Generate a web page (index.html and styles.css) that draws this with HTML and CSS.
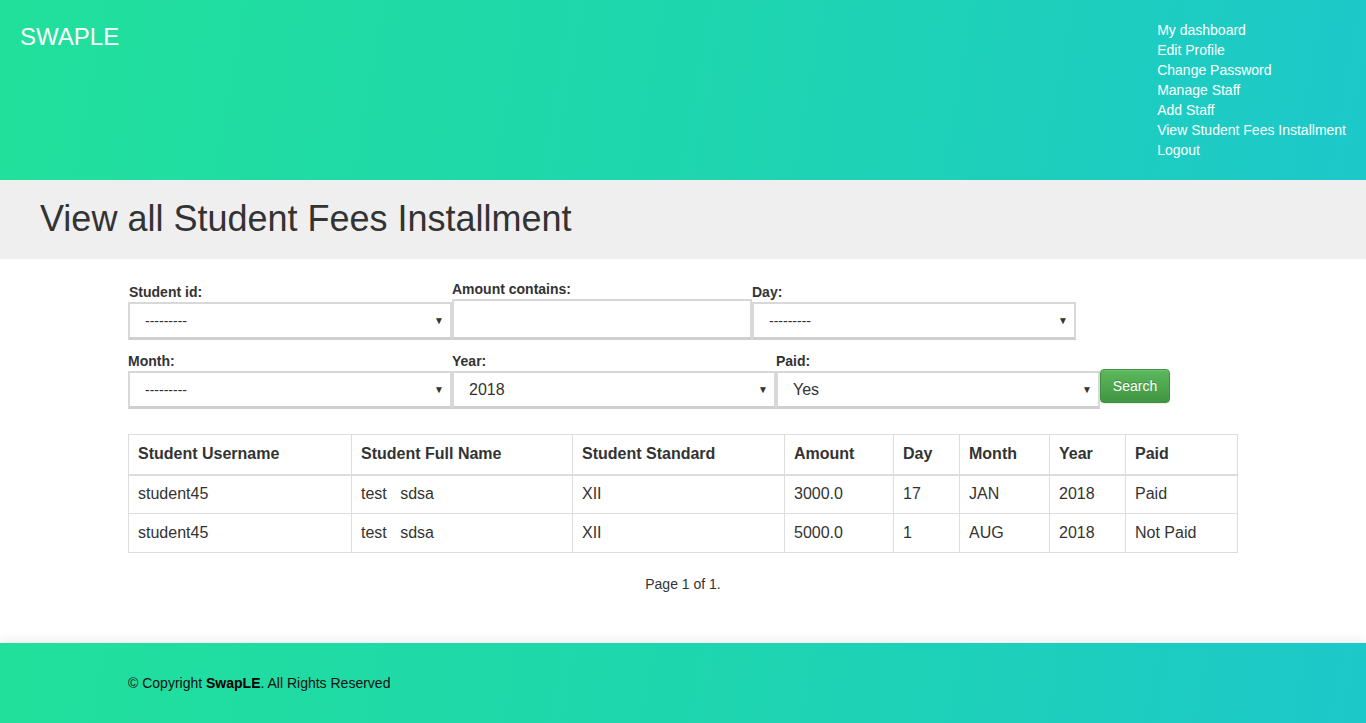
FILE: index.html
```html
<!DOCTYPE html>
<html>
<head>
<meta charset="utf-8">
<title>View all Student Fees Installment</title>
<link rel="stylesheet" href="styles.css">
</head>
<body>
<header class="topbar">
  <div class="logo">SWAPLE</div>
  <nav class="nav">
    <a href="#">My dashboard</a>
    <a href="#">Edit Profile</a>
    <a href="#">Change Password</a>
    <a href="#">Manage Staff</a>
    <a href="#">Add Staff</a>
    <a href="#">View Student Fees Installment</a>
    <a href="#">Logout</a>
  </nav>
</header>

<section class="titlebar">
  <h1>View all Student Fees Installment</h1>
</section>

<main class="content">
  <form class="filters">
    <div class="row">
      <div class="field w324 first">
        <label>Student id:</label>
        <div class="selectwrap"><select><option>---------</option></select><span class="arrow">▼</span></div>
      </div>
      <div class="field w300">
        <label>Amount contains:</label>
        <input type="text" class="textin">
      </div>
      <div class="field w324">
        <label>Day:</label>
        <div class="selectwrap"><select><option>---------</option></select><span class="arrow">▼</span></div>
      </div>
    </div>
    <div class="row row2">
      <div class="field w324">
        <label>Month:</label>
        <div class="selectwrap"><select><option>---------</option></select><span class="arrow">▼</span></div>
      </div>
      <div class="field w324">
        <label>Year:</label>
        <div class="selectwrap"><select class="big"><option>2018</option></select><span class="arrow">▼</span></div>
      </div>
      <div class="field w324">
        <label>Paid:</label>
        <div class="selectwrap"><select class="big"><option>Yes</option></select><span class="arrow">▼</span></div>
      </div>
      <button type="button" class="btn">Search</button>
    </div>
  </form>

  <table class="grid">
    <colgroup>
      <col class="c1"><col class="c2"><col class="c3"><col class="c4"><col class="c5"><col class="c6"><col class="c7"><col class="c8">
    </colgroup>
    <thead>
      <tr><th>Student Username</th><th>Student Full Name</th><th>Student Standard</th><th>Amount</th><th>Day</th><th>Month</th><th>Year</th><th>Paid</th></tr>
    </thead>
    <tbody>
      <tr><td>student45</td><td>test&nbsp;&nbsp;&nbsp;sdsa</td><td>XII</td><td>3000.0</td><td>17</td><td>JAN</td><td>2018</td><td>Paid</td></tr>
      <tr><td>student45</td><td>test&nbsp;&nbsp;&nbsp;sdsa</td><td>XII</td><td>5000.0</td><td>1</td><td>AUG</td><td>2018</td><td>Not Paid</td></tr>
    </tbody>
  </table>

  <p class="pager">Page 1 of 1.</p>
</main>

<footer class="footer">
  <div class="footinner">© Copyright <strong>SwapLE</strong>. All Rights Reserved</div>
</footer>
</body>
</html>
```

FILE: styles.css
```css
* { box-sizing: border-box; }
html, body { margin: 0; padding: 0; }
body {
  font-family: "Liberation Sans", Arial, sans-serif;
  font-size: 14px;
  line-height: 20px;
  color: #333;
  background: #fff;
}

.topbar {
  height: 180px;
  display: flex;
  justify-content: space-between;
  align-items: flex-start;
  background: linear-gradient(100deg, #21e09b 0%, #1ed6ae 50%, #1dc8ca 100%);
  color: #fff;
}
.logo {
  font-size: 24px;
  line-height: 28px;
  padding: 23px 20px 0 20px;
}
.nav {
  display: flex;
  flex-direction: column;
  padding: 20px 20px 0 0;
}
.nav a {
  color: #fff;
  text-decoration: none;
  font-size: 14px;
  line-height: 20px;
}

.titlebar {
  background: #efefef;
  height: 79px;
  padding: 19px 40px 0 40px;
}
.titlebar h1 {
  margin: 0;
  font-weight: 400;
  font-size: 36px;
  line-height: 40px;
  color: #333;
}

.content {
  width: 1110px;
  margin: 0 auto;
  padding: 20px 0 49px 0;
}

.filters { margin: 0; }
.row {
  display: flex;
  align-items: flex-end;
}
.row2 {
  margin-top: 11px;
}
.field {
  display: flex;
  flex-direction: column;
}
.w324 { width: 324px; }
.w300 { width: 300px; }
.field label {
  font-weight: 700;
  font-size: 14px;
  line-height: 20px;
  color: #333;
}
.field.first label { padding-left: 1px; }

.selectwrap {
  position: relative;
  height: 38px;
}
.selectwrap select {
  -webkit-appearance: none;
  appearance: none;
  width: 100%;
  height: 38px;
  border: 2px solid #d8d8d8;
  border-bottom-width: 3px;
  border-bottom-color: #cfcfcf;
  border-radius: 0;
  background: #fff;
  font-family: "Liberation Sans", Arial, sans-serif;
  font-size: 14px;
  color: #333;
  padding: 0 0 0 15px;
  outline: none;
}
.selectwrap select.big { font-size: 16px; }
.arrow {
  position: absolute;
  right: 8px;
  top: 14px;
  font-size: 10px;
  line-height: 10px;
  color: #333;
  pointer-events: none;
}

.textin {
  width: 100%;
  height: 41px;
  border: 2px solid #d8d8d8;
  border-bottom-width: 3px;
  border-bottom-color: #cfcfcf;
  border-radius: 0;
  background: #fff;
  outline: none;
  font-family: "Liberation Sans", Arial, sans-serif;
  font-size: 16px;
  padding: 0 10px;
}

.btn {
  width: 70px;
  height: 34px;
  margin-bottom: 6px;
  border: 1px solid #3e8f3e;
  border-radius: 4px;
  background: linear-gradient(#5cb85c, #419641);
  color: #fff;
  font-family: "Liberation Sans", Arial, sans-serif;
  font-size: 14px;
  line-height: 20px;
  padding: 0;
  text-shadow: 0 -1px 0 rgba(0,0,0,0.2);
  box-shadow: inset 0 1px 0 rgba(255,255,255,0.15), 0 1px 1px rgba(0,0,0,0.075);
}

.grid {
  width: 1110px;
  margin-top: 25px;
  border-collapse: collapse;
  table-layout: fixed;
  font-size: 16px;
  color: #333;
}
.c1 { width: 223px; }
.c2 { width: 221px; }
.c3 { width: 212px; }
.c4 { width: 109px; }
.c5 { width: 66px; }
.c6 { width: 90px; }
.c7 { width: 76px; }
.c8 { width: 112px; }
.grid th, .grid td {
  border: 1px solid #ddd;
  text-align: left;
  padding: 0 8px 0 9px;
  height: 39px;
  line-height: 22px;
  vertical-align: middle;
}
.grid th {
  font-weight: 700;
  height: 40px;
  border-bottom: 2px solid #ddd;
}

.pager {
  text-align: center;
  margin: 21px 0 0 0;
  font-size: 14px;
  line-height: 20px;
  color: #333;
}

.footer {
  height: 80px;
  background: linear-gradient(100deg, #21e09b 0%, #1ed6ae 50%, #1dc8ca 100%);
  box-shadow: 0 -4px 8px rgba(0,0,0,0.06);
}
.footinner {
  width: 1110px;
  margin: 0 auto;
  padding-top: 30px;
  font-size: 14px;
  line-height: 20px;
  color: #111;
}
.footinner strong { font-weight: 700; color: #000; }
```
